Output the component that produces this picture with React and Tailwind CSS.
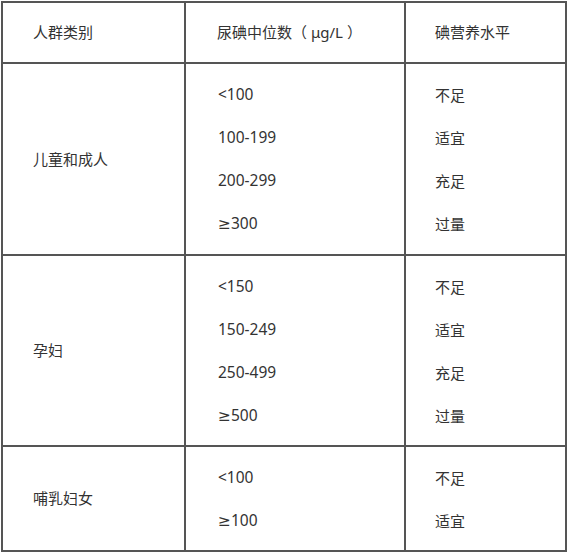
const rows = [
  { group: '儿童和成人', h: 'h-[190px]', items: [['<100', '不足'], ['100-199', '适宜'], ['200-299', '充足'], ['≥300', '过量']] },
  { group: '孕妇', h: 'h-[189px]', items: [['<150', '不足'], ['150-249', '适宜'], ['250-499', '充足'], ['≥500', '过量']] },
  { group: '哺乳妇女', h: 'h-[103px]', items: [['<100', '不足'], ['≥100', '适宜']] },
]

const font = { fontFamily: '"Noto Sans CJK SC", "Noto Sans", sans-serif' }
const latin = { fontFamily: '"Noto Sans", "DejaVu Sans", "Noto Sans CJK SC", sans-serif' }

export default function App() {
  return (
    <div className="bg-white w-[569px] h-[553px] pt-px pl-px text-[15px] text-[#333]" style={font}>
      <div className="grid grid-cols-[181px_218px_159px] gap-[2px] p-[2px] bg-[#555] w-[566px]">
        {/* header */}
        <div className="bg-white h-[59px] flex items-center pl-[30px]">人群类别</div>
        <div className="bg-white h-[59px] flex items-center pl-[31px]">
          尿碘中位数（<span style={latin}>&nbsp;μg/L&nbsp;</span>）
        </div>
        <div className="bg-white h-[59px] flex items-center pl-[29px]">碘营养水平</div>

        {rows.map((r) => (
          <div key={r.group} className="contents">
            <div className={`bg-white ${r.h} flex items-center pl-[30px]`}>{r.group}</div>
            <div className={`bg-white ${r.h} flex flex-col justify-center pl-[32px] text-[15.5px]`} style={latin}>
              {r.items.map(([v]) => (
                <div key={v} className="leading-[43px]">{v}</div>
              ))}
            </div>
            <div className={`bg-white ${r.h} flex flex-col justify-center pl-[29px]`}>
              {r.items.map(([v, l]) => (
                <div key={v} className="leading-[43px]">{l}</div>
              ))}
            </div>
          </div>
        ))}
      </div>
    </div>
  )
}
